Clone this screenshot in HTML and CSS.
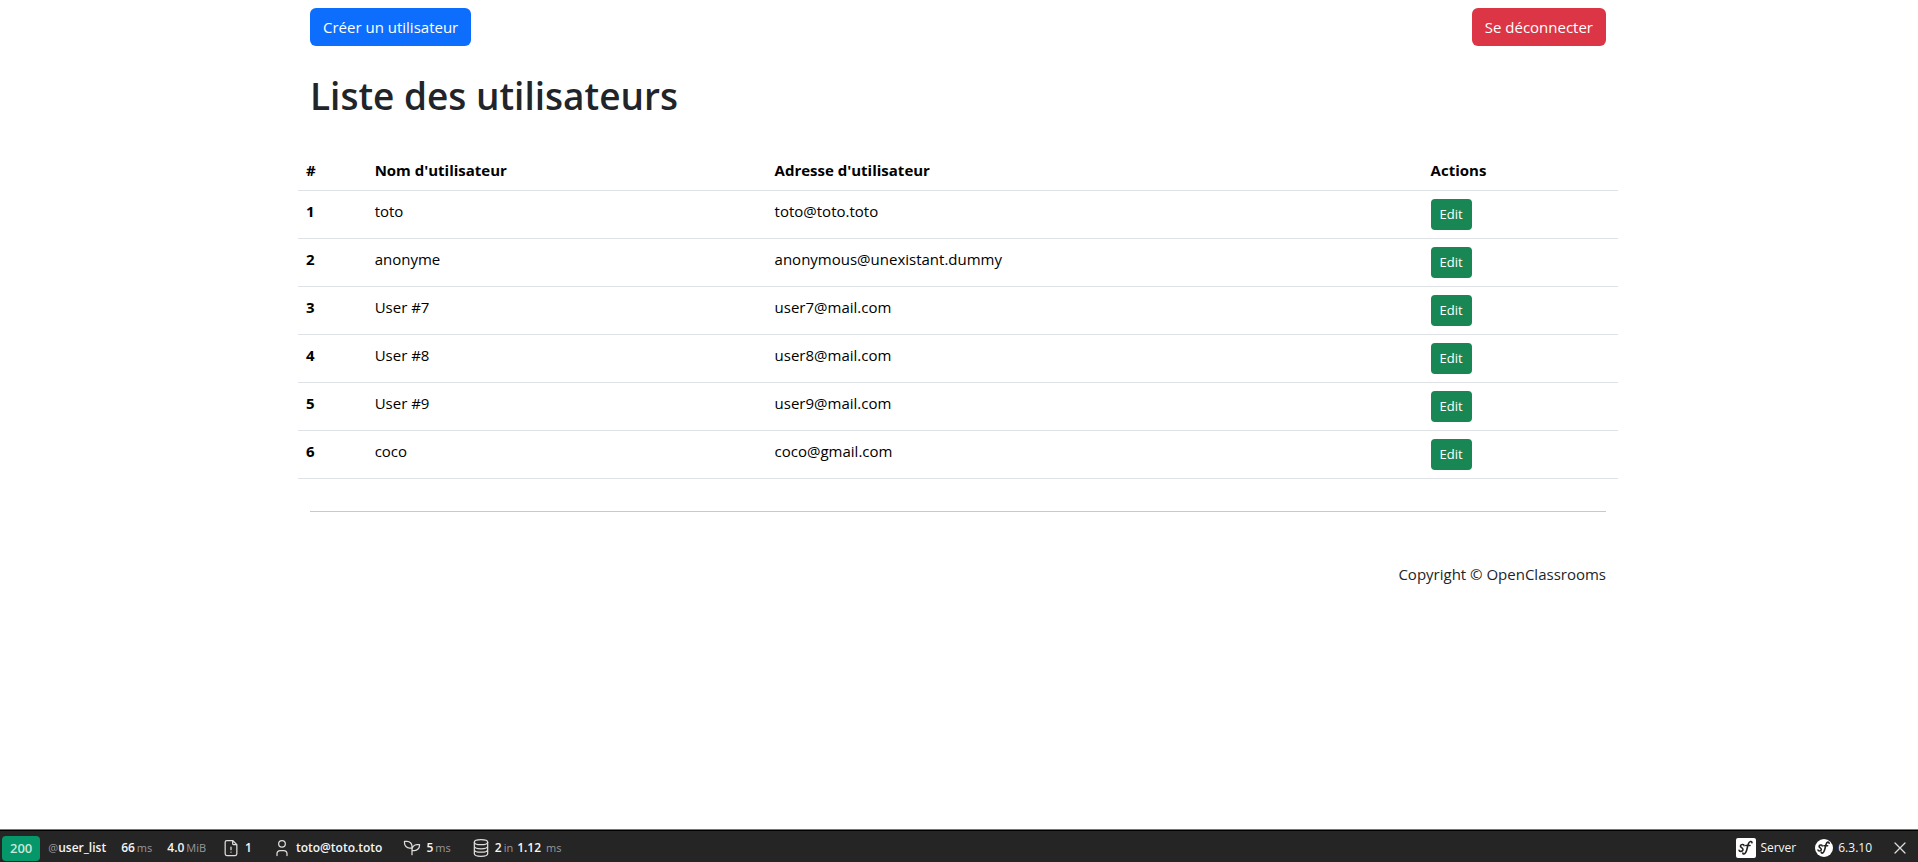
FILE: index.html
```html
<!DOCTYPE html>
<html lang="fr">
<head>
<meta charset="utf-8">
<title>Liste des utilisateurs</title>
<link rel="stylesheet" href="styles.css">
</head>
<body>
<div class="container">
  <header class="topbar">
    <a class="btn btn-primary" href="#">Créer un utilisateur</a>
    <a class="btn btn-danger" href="#">Se déconnecter</a>
  </header>
  <main>
    <h1 class="title">Liste des utilisateurs</h1>
    <table class="table">
      <colgroup><col class="col-id"><col class="col-name"><col class="col-mail"><col class="col-actions"></colgroup>
      <thead>
        <tr><th scope="col">#</th><th scope="col">Nom d'utilisateur</th><th scope="col">Adresse d'utilisateur</th><th scope="col">Actions</th></tr>
      </thead>
      <tbody>
        <tr><th scope="row">1</th><td>toto</td><td>toto@toto.toto</td><td><a class="btn btn-success" href="#">Edit</a></td></tr>
        <tr><th scope="row">2</th><td>anonyme</td><td>anonymous@unexistant.dummy</td><td><a class="btn btn-success" href="#">Edit</a></td></tr>
        <tr><th scope="row">3</th><td>User #7</td><td>user7@mail.com</td><td><a class="btn btn-success" href="#">Edit</a></td></tr>
        <tr><th scope="row">4</th><td>User #8</td><td>user8@mail.com</td><td><a class="btn btn-success" href="#">Edit</a></td></tr>
        <tr><th scope="row">5</th><td>User #9</td><td>user9@mail.com</td><td><a class="btn btn-success" href="#">Edit</a></td></tr>
        <tr><th scope="row">6</th><td>coco</td><td>coco@gmail.com</td><td><a class="btn btn-success" href="#">Edit</a></td></tr>
      </tbody>
    </table>
  </main>
  <footer class="footer">
    <p class="copyright">Copyright © OpenClassrooms</p>
  </footer>
</div>

<div class="toolbar">
  <div class="group">
    <a class="item route" href="#"><span class="status">200</span><span><span class="label">@</span>user_list</span></a>
    <a class="item" href="#"><span>66</span><span class="label">ms</span></a>
    <a class="item" href="#"><span>4.0</span><span class="label">MiB</span></a>
    <a class="item with-icon" href="#">
      <svg class="icon" viewBox="0 0 24 24"><path d="M14 3v4a1 1 0 0 0 1 1h4M17 21H7a2 2 0 0 1-2-2V5a2 2 0 0 1 2-2h7l5 5v11a2 2 0 0 1-2 2zM12 17v.01M12 11v3"/></svg>
      <span>1</span>
    </a>
    <a class="item with-icon" href="#">
      <svg class="icon" viewBox="0 0 24 24"><circle cx="12" cy="7" r="4"/><path d="M6 21v-2a4 4 0 0 1 4-4h4a4 4 0 0 1 4 4v2"/></svg>
      <span>toto@toto.toto</span>
    </a>
    <a class="item with-icon" href="#">
      <svg class="icon" viewBox="0 0 24 24"><path d="M12 10a6 6 0 0 0-6-6H3v2a6 6 0 0 0 6 6h3M12 14a6 6 0 0 1 6-6h3v1a6 6 0 0 1-6 6h-3M12 20V10"/></svg>
      <span>5</span><span class="label">ms</span>
    </a>
    <a class="item with-icon" href="#">
      <svg class="icon" viewBox="0 0 24 24"><ellipse cx="12" cy="5" rx="8" ry="3"/><path d="M4 5v14a8 3 0 0 0 16 0V5M4 10a8 3 0 0 0 16 0M4 14a8 3 0 0 0 16 0"/></svg>
      <span>2</span><span class="label">in</span><span class="query-time">1.12</span><span class="label">ms</span>
    </a>
  </div>
  <div class="group group-end">
    <a class="item" href="#">
      <svg class="logo" viewBox="0 0 20 20"><rect width="20" height="20" rx="2" fill="#fff"/><g class="mark"><path d="M8 7.6c.1-1.7-3.5-1.5-3.6.4-.1 1.7 2.9 1.8 2.6 3.8-.3 1.9-3.6 2.1-3.9.5"/><path d="M16 4.8c-.2-2-2.8-2-3.9 1.7-1 3.3-1.4 9.3-4.2 9.5-.9 0-1.2-.5-1-1M9.8 7.5h4.2"/></g></svg>
      <span>Server</span>
    </a>
    <a class="item" href="#">
      <svg class="logo" viewBox="0 0 20 20"><circle cx="10" cy="10" r="9" fill="#fff"/><g class="mark"><path d="M8.2 8c.1-1.5-3-1.3-3.1.3-.1 1.5 2.5 1.6 2.2 3.3-.3 1.7-3.1 1.8-3.3.4"/><path d="M15.2 5.3c-.2-1.8-2.4-1.8-3.3 1.4-.9 3-1.2 8.2-3.7 8.4-.8 0-1-.4-.9-.9M9.9 7.8h3.7"/></g></svg>
      <span>6.3.10</span>
    </a>
    <button class="close" type="button" aria-label="Close toolbar">
      <svg class="icon" viewBox="0 0 24 24"><path d="M18 6L6 18M6 6l12 12"/></svg>
    </button>
  </div>
</div>
</body>
</html>
```
FILE: styles.css
```css
* {
  box-sizing: border-box;
}

body {
  margin: 0;
  padding-right: 2px;
  background: #fff;
  color: #212529;
  font-family: "Open Sans", "Noto Sans", sans-serif;
  font-size: 15px;
  line-height: 24px;
}

a {
  color: inherit;
  text-decoration: none;
}

.container {
  max-width: 1320px;
  margin: 0 auto;
}

.topbar {
  display: flex;
  justify-content: space-between;
  padding: 8px 12px;
}

.btn {
  display: inline-block;
  padding: 7px 13px;
  border-radius: 6px;
  color: #fff;
  white-space: nowrap;
}

.btn-primary {
  background: #0d6efd;
}

.btn-danger {
  background: #dc3545;
}

.btn-success {
  padding: 5px 9px;
  border-radius: 4px;
  background: #198754;
  font-size: 13px;
  line-height: 21px;
  vertical-align: top;
}

.title {
  margin: 18px 12px 30px;
  font-size: 37px;
  font-weight: 600;
  line-height: 48px;
}

.table {
  width: 100%;
  margin: 0;
  border-collapse: collapse;
  table-layout: fixed;
  color: #000;
}

.table th,
.table td {
  padding: 8px;
  border-bottom: 1px solid #dee2e6;
  text-align: left;
  vertical-align: top;
}

.table th {
  font-weight: 700;
}

.col-id {
  width: 5.2%;
}

.col-name {
  width: 30.3%;
}

.col-mail {
  width: 49.7%;
}

.footer {
  margin: 32px 12px 0;
  padding-top: 50px;
  border-top: 1px solid #c8c9ca;
}

.copyright {
  margin: 0;
  text-align: right;
}

.toolbar {
  position: fixed;
  right: 0;
  bottom: 0;
  left: 0;
  display: flex;
  justify-content: space-between;
  padding-top: 4px;
  border-top: 1px solid #777;
  background: #252525;
  box-shadow: inset 0 1px #000;
  color: #f5f5f5;
  font-size: 12px;
  line-height: 28px;
}

.group {
  display: flex;
  gap: 15px;
  font-weight: 600;
}

.group-end {
  gap: 18px;
  padding-right: 8px;
  font-weight: 400;
}

.item {
  display: flex;
  align-items: center;
  gap: 2px;
  white-space: nowrap;
}

.with-icon {
  padding-right: 5px;
}

.route {
  gap: 8px;
  padding-left: 2px;
}

.status {
  margin-top: 1px;
  padding: 0 8px;
  border-radius: 4px;
  background: #059669;
  color: #c8e8da;
  font-size: 13px;
  font-weight: 600;
  line-height: 25px;
}

.label {
  color: #999;
  font-size: 11px;
  font-weight: 400;
}

.icon,
.logo {
  width: 20px;
  height: 20px;
}

.item .icon,
.item .logo {
  margin-right: 2px;
}

.icon {
  fill: none;
  stroke: #ddd;
  stroke-width: 1.5;
  stroke-linecap: round;
  stroke-linejoin: round;
}

.mark {
  fill: none;
  stroke: #222;
  stroke-width: 1.6;
  stroke-linecap: round;
}

.query-time {
  margin: 0 3px 0 2px;
}

.close {
  display: flex;
  align-items: center;
  padding: 0;
  border: 0;
  background: none;
}
```
